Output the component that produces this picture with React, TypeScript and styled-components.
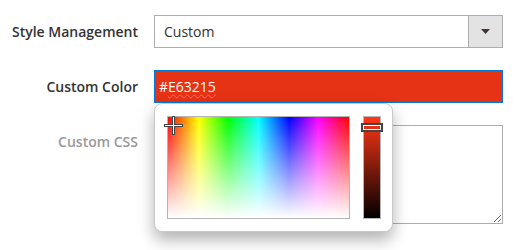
import React from "react";
import styled, { createGlobalStyle } from "styled-components";

const Global = createGlobalStyle`
  html, body { margin: 0; padding: 0; background: #fff; }
  body { font-family: "Open Sans", "Noto Sans", sans-serif; min-height: 250px; }
  * { box-sizing: border-box; }
`;

const Form = styled.div`
  display: grid;
  grid-template-columns: 138px 349px;
  grid-auto-rows: min-content;
  column-gap: 16px;
  row-gap: 22px;
  padding-top: 15px;
  width: 526px;
  min-height: 250px;
`;

const Label = styled.label<{ $muted?: boolean }>`
  font-size: 14px;
  font-weight: 600;
  line-height: 33px;
  height: 33px;
  text-align: right;
  color: ${(p) => (p.$muted ? "#999999" : "#333333")};
  align-self: start;
  white-space: nowrap;
`;

const Select = styled.div`
  display: flex;
  height: 33px;
  border: 1px solid #adadad;
  background: #fff;
`;

const SelectValue = styled.div`
  flex: 1;
  padding-left: 9px;
  font-size: 14px;
  line-height: 31px;
  color: #303030;
`;

const SelectArrow = styled.div`
  width: 34px;
  border-left: 1px solid #adadad;
  background: #e3e3e3;
  display: flex;
  align-items: center;
  justify-content: center;
`;

const ColorCell = styled.div`
  position: relative;
  z-index: 2;
  height: 33px;
`;

const ColorInput = styled.div<{ $color: string }>`
  height: 33px;
  border: 1px solid #007bdb;
  background: ${(p) => p.$color};
  color: #fff;
  font-size: 14px;
  line-height: 31px;
  padding-left: 4px;
`;

const Misspelled = styled.span`
  text-decoration: underline wavy #ff6a6a;
  text-decoration-thickness: 1px;
  text-underline-offset: 2px;
`;

const Popup = styled.div`
  position: absolute;
  top: 33px;
  left: 0;
  width: 239px;
  display: flex;
  gap: 13px;
  padding: 12px 11px 12px 12px;
  background: #fff;
  border: 1px solid #c9c9c9;
  border-radius: 8px;
  box-shadow: 0 8px 16px rgba(0, 0, 0, 0.3);
`;

const Saturation = styled.div`
  position: relative;
  flex: none;
  width: 183px;
  height: 103px;
  border: 1px solid #b5b5b5;
  background: linear-gradient(to bottom, rgba(255, 255, 255, 0) 0%, #fff 100%),
    linear-gradient(
      to right,
      #ff0000 0%,
      #ffff00 17%,
      #00ff00 33%,
      #00ffff 50%,
      #0000ff 67%,
      #ff00ff 83%,
      #ff0000 100%
    );
`;

const Crosshair = styled.svg`
  position: absolute;
  left: -4px;
  top: -1px;
  overflow: visible;
`;

const Value = styled.div<{ $top: string }>`
  position: relative;
  flex: none;
  width: 18px;
  height: 103px;
  border: 1px solid #b5b5b5;
  background: linear-gradient(to bottom, ${(p) => p.$top} 0%, #000 100%);
`;

const Handle = styled.div`
  position: absolute;
  left: -3px;
  top: 6px;
  width: 22px;
  height: 9px;
  border: 2px solid #454545;
  box-shadow: inset 0 0 0 1px #fff;
`;

const TextArea = styled.textarea`
  display: block;
  width: 349px;
  height: 99px;
  margin: 0;
  border: 1px solid #adadad;
  border-radius: 0;
  resize: both;
  font-family: inherit;
  font-size: 14px;
  outline: none;
`;

export default function App() {
  return (
    <>
      <Global />
      <Form>
        <Label>Style Management</Label>
        <Select>
          <SelectValue>Custom</SelectValue>
          <SelectArrow>
            <svg width="9" height="5" viewBox="0 0 9 5">
              <path d="M0 0 H9 L4.5 5 Z" fill="#41362f" />
            </svg>
          </SelectArrow>
        </Select>

        <Label>Custom Color</Label>
        <ColorCell>
          <ColorInput $color="#e63215">
            #<Misspelled>E63215</Misspelled>
          </ColorInput>
          <Popup>
            <Saturation>
              <Crosshair width="19" height="19" viewBox="0 0 19 19">
                <path d="M0 9.5 H19 M9.5 0 V19" stroke="#454545" strokeWidth="3" />
                <path d="M1 9.5 H18 M9.5 1 V18" stroke="#fff" strokeWidth="1" />
              </Crosshair>
            </Saturation>
            <Value $top="#ff3717">
              <Handle />
            </Value>
          </Popup>
        </ColorCell>

        <Label $muted>Custom CSS</Label>
        <TextArea />
      </Form>
    </>
  );
}
